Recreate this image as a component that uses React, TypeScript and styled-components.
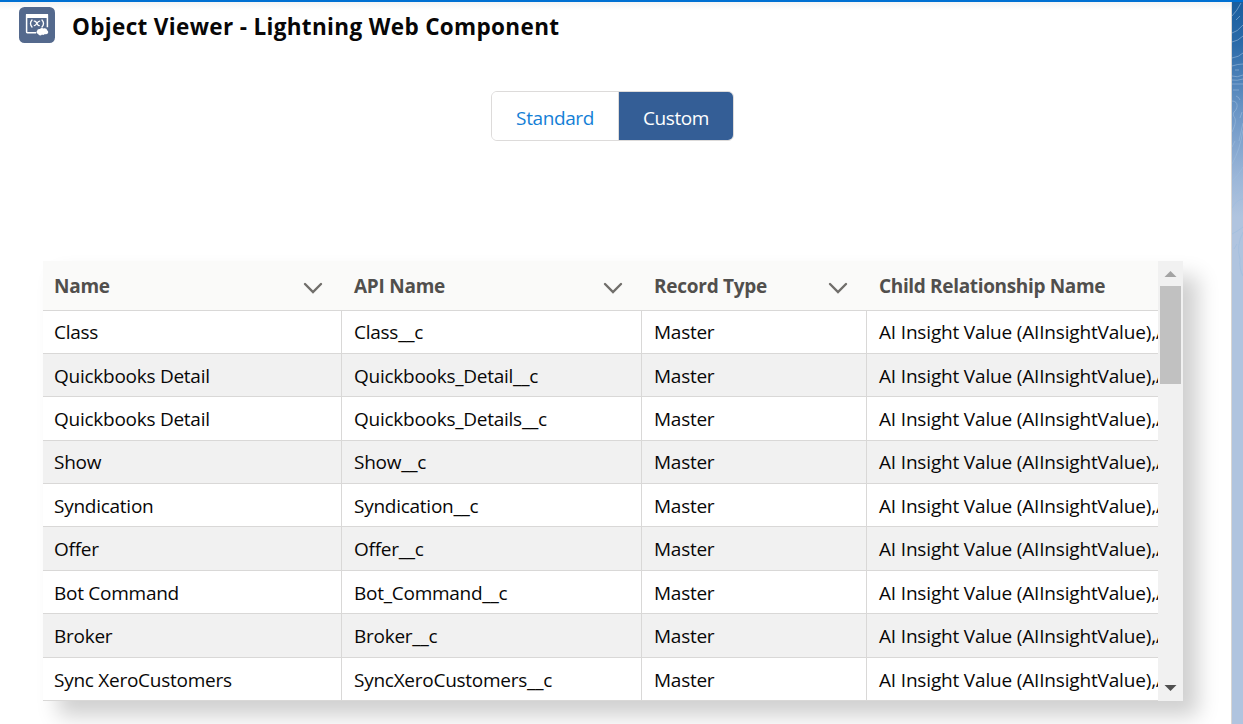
import React from "react";
import styled, { createGlobalStyle } from "styled-components";

const GlobalStyle = createGlobalStyle`
  *, *::before, *::after { box-sizing: border-box; }
  body {
    margin: 0;
    overflow: hidden;
    background: #b0c4df;
    color: #080707;
    font-family: "Open Sans", "Noto Sans", sans-serif;
  }
`;

const Page = styled.div`
  display: flex;
  height: 724px;
  border-top: 2px solid #0070d2;
  overflow: hidden;
`;

const Card = styled.main`
  display: flex;
  flex-direction: column;
  width: 1232px;
  background: linear-gradient(#f3f3f3, #fff 8px);
  border-right: 1px solid #d8d6d4;
`;

const Backdrop = styled.aside`
  width: 11px;
  background: linear-gradient(#195e9f, #2a6aa8 40px, #6793c4 105px, #9bb6d8 175px, #b0c4df 215px);
  svg { display: block; }
`;

const TitleBar = styled.header`
  display: flex;
  align-items: center;
  gap: 17px;
  height: 46px;
  padding: 0 0 0 19px;
`;

const AppIcon = styled.svg`
  flex: none;
  width: 36px;
  height: 36px;
`;

const Title = styled.h1`
  margin: 4px 0 0;
  font-size: 22.5px;
  line-height: 30px;
  font-weight: 680;
  letter-spacing: 0.34px;
  white-space: nowrap;
`;

const Switcher = styled.div`
  display: flex;
  align-self: flex-start;
  height: 50px;
  margin: 43px 0 0 491px;
  border: 1px solid #dddbda;
  border-radius: 6px;
  overflow: hidden;
`;

const SwitchButton = styled.button<{ $width: number; $active?: boolean }>`
  width: ${(p) => p.$width}px;
  padding: 4px 0 0;
  border: 0;
  border-left: ${(p) => (p.$active ? "1px solid #dddbda" : "0")};
  background: ${(p) => (p.$active ? "#345e96" : "#fff")};
  color: ${(p) => (p.$active ? "#fff" : "#1480d6")};
  font-family: inherit;
  font-size: 19px;
  letter-spacing: -0.4px;
`;

const Viewer = styled.section`
  display: flex;
  width: 1140px;
  height: 440px;
  margin: 120px 0 0 43px;
  background: #fff;
  box-shadow: 15px 15px 20px #d0d0d0;
`;

const Grid = styled.div`
  width: 1115px;
  overflow: hidden;
`;

const Row = styled.div<{ $height: number; $inset?: number; $striped?: boolean }>`
  display: grid;
  grid-template-columns: 299px 300px 225px 291px;
  height: ${(p) => p.$height}px;
  border-top: 1px solid #d9d8d7;
  background: ${(p) => (p.$striped ? "#f1f1f1" : "#fff")};
  line-height: ${(p) => 43 + 2 * (p.$inset ?? 0)}px;
  &:last-child { border-bottom: 1px solid #d9d8d7; }
`;

const HeadRow = styled(Row)`
  border-top: 0;
  background: #fafaf9;
`;

const Cell = styled.div`
  padding-left: 12px;
  border-right: 1px solid #d9d8d7;
  overflow: hidden;
  white-space: nowrap;
  font-size: 19px;
  letter-spacing: -0.26px;
  &:first-child { padding-left: 11px; }
  &:last-child { border-right: 0; letter-spacing: -0.17px; }
`;

const HeadCell = styled(Cell)`
  display: flex;
  align-items: center;
  justify-content: space-between;
  padding-top: 2px;
  padding-right: 19.5px;
  border-right: 0;
  color: #514f4d;
  font-weight: 700;
  &:last-child { letter-spacing: -0.34px; }
`;

const Chevron = styled.svg`
  width: 20px;
  height: 14px;
  margin-top: 2px;
`;

const Scrollbar = styled.div`
  display: flex;
  flex-direction: column;
  align-items: center;
  width: 25px;
  background: #f1f1f1;
`;

const Arrow = styled.svg`
  width: 25px;
  height: 25px;
`;

const Thumb = styled.div`
  width: 21px;
  height: 98px;
  margin-bottom: auto;
  background: #c1c1c1;
`;

const columns = ["Name", "API Name", "Record Type", "Child Relationship Name"];

const objects = [
  ["Class", "Class__c"],
  ["Quickbooks Detail", "Quickbooks_Detail__c"],
  ["Quickbooks Detail", "Quickbooks_Details__c"],
  ["Show", "Show__c"],
  ["Syndication", "Syndication__c"],
  ["Offer", "Offer__c"],
  ["Bot Command", "Bot_Command__c"],
  ["Broker", "Broker__c"],
  ["Sync XeroCustomers", "SyncXeroCustomers__c"],
];

export default function App() {
  return (
    <>
      <GlobalStyle />
      <Page>
        <Card>
          <TitleBar>
            <AppIcon viewBox="0 0 36 36">
              <rect width="36" height="36" rx="5.5" fill="#54698d" />
              <path d="M17 25.7H8.2a.6.6 0 0 1-.6-.6V8.2h20.8v12" fill="none" stroke="#fff" strokeWidth="1.5" />
              <path d="M7 7h22v4H7z" fill="#fff" />
              <path
                d="M13 13c-1.900 2.200-1.900 4.800 0 7M23 13c1.900 2.200 1.900 4.800 0 7M15.300 14.200c2.600-.8 2.300 4.600 5 4.400M20.600 14.200c-2.200-.2-3.200 4.600-5.300 4.400"
                fill="none"
                stroke="#fff"
                strokeWidth="1.3"
                strokeLinecap="round"
              />
              <path
                d="M18.200 23.800c0-1.400 1.400-2.200 2.700-1.700.8-1.400 2.700-1.600 3.700-.5 1.400-.8 3.400 0 3.500 1.700 1.400.5 1.500 2.700.3 3.500-.7.600-1.800.500-2.500.200-.9 1-2.200 1.100-2.900.6-1 1.500-3.500 1.100-3.900-.8-1.700.1-2.300-2-.9-3z"
                fill="#fff"
              />
            </AppIcon>
            <Title>Object Viewer - Lightning Web Component</Title>
          </TitleBar>
          <Switcher>
            <SwitchButton $width={126}>Standard</SwitchButton>
            <SwitchButton $width={115} $active>Custom</SwitchButton>
          </Switcher>
          <Viewer>
            <Grid>
              <HeadRow $height={49}>
                {columns.map((label, i) => (
                  <HeadCell key={label}>
                    {label}
                    {i < 3 && (
                      <Chevron viewBox="0 0 20 14">
                        <path d="M2 3l8 8 8-8" fill="none" stroke="#706e6b" strokeWidth="2.4" strokeLinecap="round" />
                      </Chevron>
                    )}
                  </HeadCell>
                ))}
              </HeadRow>
              {objects.map(([name, api], i) => (
                <Row
                  key={api}
                  $striped={i % 2 === 1}
                  $height={[2, 5, 7, 8].includes(i) ? 44 : 43}
                  $inset={i === 0 || i === 3 ? 0 : 1}
                >
                  <Cell>{name}</Cell>
                  <Cell>{api}</Cell>
                  <Cell>Master</Cell>
                  <Cell>AI Insight Value (AIInsightValue),AI Record Insight</Cell>
                </Row>
              ))}
            </Grid>
            <Scrollbar>
              <Arrow viewBox="0 0 25 25"><path d="M6.500 16L12.500 10l6 6z" fill="#a3a3a3" /></Arrow>
              <Thumb />
              <Arrow viewBox="0 0 25 25"><path d="M6.500 9L12.500 15l6-6z" fill="#505050" /></Arrow>
            </Scrollbar>
          </Viewer>
        </Card>
        <Backdrop>
          <svg width="11" height="300" viewBox="0 0 11 300" fill="none" stroke="#9dbddd" strokeOpacity=".6">
            <path d="M0 14Q5 9 9 1M0 31Q5 30 11 23M0 40Q6 39 11 34M0 56Q7 55 11 51M0 64Q6 62 11 62M0 74Q5 76 11 73M0 78Q5 79 11 77M0 82H11" />
            <path d="M4 18L8 14M3 68H7M1 88H7M4 94Q7 95 8 98M0 99C7 99 6 107 2 110C-1 117 8 113 0 130M10 110L8 116M11 121L7 139M0 145L3 139M0 162Q8 148 11 128M0 179Q6 174 11 165" />
            <path d="M3 192L7 190M0 206Q5 197 11 197M0 232Q6 229 11 225M2 247L5 242M11 230Q4 244 8 257Q7 267 11 274" />
          </svg>
        </Backdrop>
      </Page>
    </>
  );
}
